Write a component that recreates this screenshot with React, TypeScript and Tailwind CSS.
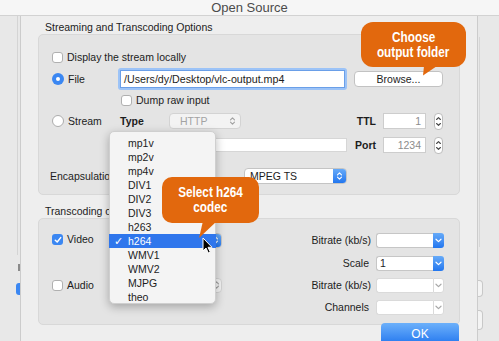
import React from 'react'

function Check({ on = false }: { on?: boolean }) {
  if (on)
    return (
      <span className="w-[11px] h-[11px] rounded-[3px] bg-[#3b87f2] flex items-center justify-center shrink-0">
        <svg width="8" height="8" viewBox="0 0 8 8">
          <path d="M1.3 4.2 L3.2 6 L6.7 1.6" fill="none" stroke="white" strokeWidth="1.5" strokeLinecap="round" strokeLinejoin="round" />
        </svg>
      </span>
    )
  return <span className="w-[11px] h-[11px] rounded-[3px] bg-white border border-[#b0b0b0] shrink-0" />
}

function Radio({ on = false }: { on?: boolean }) {
  if (on)
    return (
      <span className="w-[12px] h-[12px] rounded-full bg-[#3b87f2] flex items-center justify-center shrink-0">
        <span className="w-[4px] h-[4px] rounded-full bg-white" />
      </span>
    )
  return <span className="w-[12px] h-[12px] rounded-full bg-white border border-[#acacac] shrink-0" />
}

function UpDown({ color = 'white' }: { color?: string }) {
  return (
    <svg width="7" height="10" viewBox="0 0 7 10">
      <path d="M1.5 3.8 L3.5 1.8 L5.5 3.8 M1.5 6.2 L3.5 8.2 L5.5 6.2" fill="none" stroke={color} strokeWidth="1.1" strokeLinecap="round" strokeLinejoin="round" />
    </svg>
  )
}

function Down({ color = 'white' }: { color?: string }) {
  return (
    <svg width="7" height="5" viewBox="0 0 7 5">
      <path d="M1 1.2 L3.5 3.6 L6 1.2" fill="none" stroke={color} strokeWidth="1.2" strokeLinecap="round" strokeLinejoin="round" />
    </svg>
  )
}

function Stepper() {
  return (
    <span className="w-[9px] h-[17px] ml-[8px] rounded-[4px] bg-white border border-[#bcbcbc] flex flex-col items-center justify-center shrink-0">
      <svg width="7" height="13" viewBox="0 0 7 13">
        <path d="M1.6 4.5 L3.5 2.6 L5.4 4.5 M1.6 8.5 L3.5 10.4 L5.4 8.5" fill="none" stroke="#444" strokeWidth="1.1" strokeLinecap="round" strokeLinejoin="round" />
      </svg>
    </span>
  )
}

function NumField({ value }: { value: string }) {
  return (
    <span className="w-[43px] h-[16px] ml-[7px] bg-white border border-[#cdcdcd] flex items-center justify-end pr-[4px] text-[#8c8c8c] shrink-0">
      {value}
    </span>
  )
}

function Combo({ value = '', disabled = false }: { value?: string; disabled?: boolean }) {
  return (
    <span className="w-[68px] h-[15px] ml-[5px] flex shrink-0">
      <span className={`flex-1 bg-white border border-r-0 rounded-l-[3px] flex items-center pl-[3px] ${disabled ? 'border-[#dadada]' : 'border-[#c6c6c6]'}`}>
        {value}
      </span>
      {disabled ? (
        <span className="w-[11px] h-full bg-white border border-[#dadada] rounded-r-[3px] flex items-center justify-center">
          <Down color="#a8a8a8" />
        </span>
      ) : (
        <span className="w-[11px] h-full bg-gradient-to-b from-[#66aaf8] to-[#2176ef] rounded-r-[3px] flex items-center justify-center">
          <Down />
        </span>
      )}
    </span>
  )
}

const codecs = ['mp1v', 'mp2v', 'mp4v', 'DIV1', 'DIV2', 'DIV3', 'h263', 'h264', 'WMV1', 'WMV2', 'MJPG', 'theo']

export default function App() {
  return (
    <div className="relative w-[499px] h-[341px] overflow-hidden bg-[#e8e8e8] font-['Liberation_Sans',Arial,sans-serif] text-[10.5px] leading-[13px] text-[#1c1c1c]">
      {/* title bar */}
      <div className="h-[16px] bg-[#f6f6f6] border-b border-[#d2d2d2] flex justify-center items-center text-[13px] leading-none text-[#4b4b4b]">
        Open Source
      </div>

      <div className="flex h-[325px]">
        {/* window behind, left */}
        <div className="w-[20px] shrink-0 flex flex-col">
          <span className="ml-[17px] w-[1px] h-[239px] bg-[#d4d4d4]" />
          <span className="ml-[18px] mt-[9px] w-[2px] h-[7px] bg-[#8a8a8a]" />
          <span className="ml-[16px] mt-[12px] w-[4px] h-[12px] rounded-l-[3px] bg-[#3b87f2]" />
        </div>

        {/* sheet */}
        <div className="w-[458px] shrink-0 bg-[#eeeeee] border-x border-[#cccccc] pt-[5px] px-[17px]">
          <div className="pl-[7px] h-[13px]">Streaming and Transcoding Options</div>

          <div className="h-[161px] rounded-[5px] bg-[#e4e4e4] border border-[#d8d8d8] pl-[13px]">
            <div className="mt-[14px] h-[16px] flex items-center gap-[4px]">
              <Check />
              <span>Display the stream locally</span>
            </div>

            <div className="mt-[3px] h-[22px] flex items-center">
              <div className="w-[66px] flex items-center gap-[4px]">
                <Radio on />
                <span>File</span>
              </div>
              <div className="w-[229px] h-[22px] rounded-[3px] bg-[#9cc3f7] p-[2px]">
                <div className="w-full h-full bg-white border border-[#6a9fe8] flex items-center pl-[3px] text-[10.7px]">
                  /Users/dy/Desktop/vlc-output.mp4
                </div>
              </div>
              <span className="ml-[7px] w-[89px] h-[16px] bg-white rounded-[4px] border border-[#c2c2c2] flex items-center justify-center">
                Browse...
              </span>
            </div>

            <div className="mt-[2px] h-[16px] flex items-center gap-[4px] ml-[69px]">
              <Check />
              <span>Dump raw input</span>
            </div>

            <div className="mt-[5px] h-[16px] flex items-center">
              <div className="w-[68px] flex items-center gap-[4px]">
                <Radio />
                <span>Stream</span>
              </div>
              <span className="w-[49px] font-bold">Type</span>
              <span className="w-[72px] h-[16px] bg-[#f3f3f3] rounded-[4px] border border-[#d3d3d3] flex items-center justify-between pl-[10px] pr-[4px] text-[#a3a3a3]">
                HTTP
                <UpDown color="#a0a0a0" />
              </span>
              <span className="w-[135px] text-right font-bold">TTL</span>
              <NumField value="1" />
              <Stepper />
            </div>

            <div className="mt-[8px] h-[16px] flex items-center">
              <span className="w-[66px]" />
              <span className="w-[229px] h-[14px] bg-white border border-[#d6d6d6]" />
              <span className="w-[29px] text-right font-bold">Port</span>
              <NumField value="1234" />
              <Stepper />
            </div>

            <div className="mt-[15px] h-[16px] flex items-center -ml-[2px]">
              <span className="w-[194px]">Encapsulation</span>
              <span className="w-[103px] h-[16px] bg-white rounded-[4px] border border-[#c4c4c4] flex items-center overflow-hidden">
                <span className="flex-1 pl-[5px]">MPEG TS</span>
                <span className="w-[13px] h-full bg-gradient-to-b from-[#66aaf8] to-[#2176ef] flex items-center justify-center">
                  <UpDown />
                </span>
              </span>
            </div>
          </div>

          <div className="mt-[10px] pl-[7px] h-[13px]">Transcoding options</div>

          <div className="h-[107px] rounded-[5px] bg-[#e4e4e4] border border-[#d8d8d8] pl-[13px]">
            <div className="mt-[13px] h-[16px] flex items-center">
              <div className="w-[66px] flex items-center gap-[4px] self-start mt-[1px]">
                <Check on />
                <span>Video</span>
              </div>
              <span className="w-[104px] h-[15px] bg-white rounded-[4px] border border-[#c4c4c4] flex items-center justify-end overflow-hidden">
                <span className="w-[12px] h-full bg-gradient-to-b from-[#66aaf8] to-[#2176ef] flex items-center justify-center">
                  <UpDown />
                </span>
              </span>
              <span className="w-[149px] text-right">Bitrate (kb/s)</span>
              <Combo />
            </div>

            <div className="mt-[7px] h-[16px] flex items-center">
              <span className="w-[170px]" />
              <span className="w-[147px] text-right">Scale</span>
              <span className="w-[2px]" />
              <Combo value="1" />
            </div>

            <div className="mt-[6px] h-[16px] flex items-center">
              <div className="w-[66px] flex items-center gap-[4px]">
                <Check />
                <span>Audio</span>
              </div>
              <span className="w-[104px] h-[15px] bg-[#f3f3f3] rounded-[4px] border border-[#d3d3d3] flex items-center justify-end pr-[1px]">
                <UpDown color="#a0a0a0" />
              </span>
              <span className="w-[149px] text-right">Bitrate (kb/s)</span>
              <Combo disabled />
            </div>

            <div className="mt-[6px] h-[16px] flex items-center">
              <span className="w-[170px]" />
              <span className="w-[147px] text-right">Channels</span>
              <span className="w-[2px]" />
              <Combo disabled />
            </div>
          </div>

          <div className="-mt-[2px] ml-[343px] w-[78px] h-[22px] rounded-t-[4px] bg-gradient-to-b from-[#6cb0fa] to-[#1f75ee] flex items-center justify-center text-white text-[12px]">
            OK
          </div>
        </div>

        {/* window behind, right */}
        <div className="flex-1 flex flex-col">
          <span className="mt-[21px] ml-[1px] w-[1px] h-[210px] bg-[#d6d6d6]" />
          <span className="mt-[33px] w-[5px] h-[17px] rounded-r-[4px] bg-[#f4f4f4] border border-l-0 border-[#c8c8c8]" />
          <span className="mt-[13px] w-[5px] h-[20px] rounded-r-[4px] bg-[#f4f4f4] border border-l-0 border-[#c8c8c8]" />
        </div>
      </div>

      {/* codec menu */}
      <div className="absolute left-[109px] top-[131px] w-[107px] h-[173px] pt-[4px] rounded-[5px] bg-[#f4f4f4] border border-[#cfcfcf] shadow-[0_3px_10px_rgba(0,0,0,0.28)]">
        {codecs.map((c) =>
          c === 'h264' ? (
            <div key={c} className="h-[14px] leading-[14px] -mx-[1px] bg-[#2f76ec] text-white flex">
              <span className="w-[19px] pl-[5px] text-[11px]">✓</span>
              <span>{c}</span>
            </div>
          ) : (
            <div key={c} className="h-[14px] leading-[14px] pl-[18px]">
              {c}
            </div>
          )
        )}
      </div>

      {/* callout: choose output folder */}
      <div className="absolute left-[361px] top-[22px] w-[105px] h-[45px] rounded-[12px] bg-[#e2680d] flex flex-col items-center justify-center text-white font-bold text-[14px] leading-[15px]">
        <span className="scale-x-[0.84] whitespace-nowrap">Choose</span>
        <span className="scale-x-[0.84] whitespace-nowrap">output folder</span>
      </div>
      <svg className="absolute left-[420px] top-[66px]" width="20" height="12" viewBox="0 0 20 12">
        <polygon points="4,0 17,0 3,9.5" fill="#e2680d" />
      </svg>

      {/* callout: select h264 */}
      <div className="absolute left-[162px] top-[177px] w-[97px] h-[46px] rounded-[10px] bg-[#e2680d] flex flex-col items-center justify-center text-white font-bold text-[14px] leading-[15px]">
        <span className="scale-x-[0.84] whitespace-nowrap">Select h264</span>
        <span className="scale-x-[0.84] whitespace-nowrap">codec</span>
      </div>
      <svg className="absolute left-[196px] top-[221px]" width="26" height="20" viewBox="0 0 26 20">
        <polygon points="7,0 21,0 3,17" fill="#e2680d" />
      </svg>

      {/* mouse pointer */}
      <svg className="absolute left-[202px] top-[237px]" width="12" height="18" viewBox="0 0 12 18">
        <path d="M1 1 L1 14 L4 11 L6.3 16 L8.3 15.1 L6 10.3 L10 10.3 Z" fill="black" stroke="white" strokeWidth="1" strokeLinejoin="round" />
      </svg>
    </div>
  )
}
